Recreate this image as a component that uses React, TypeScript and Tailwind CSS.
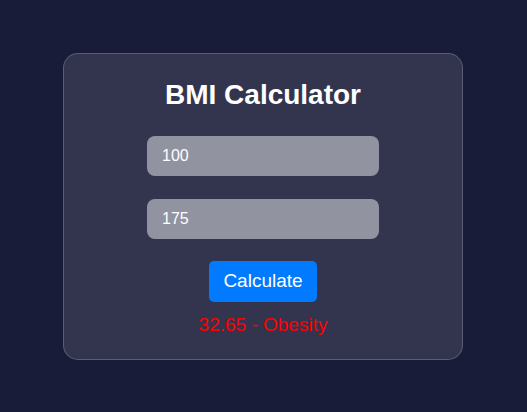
import React, { useState } from "react";

const App: React.FC = () => {
  const [weight, setWeight] = useState("100");
  const [height, setHeight] = useState("175");
  const [result, setResult] = useState("32.65 - Obesity");

  const calculate = () => {
    const w = parseFloat(weight);
    const h = parseFloat(height) / 100;
    if (!w || !h) return;
    const bmi = w / (h * h);
    let label = "Normal";
    if (bmi < 18.5) label = "Underweight";
    else if (bmi >= 30) label = "Obesity";
    else if (bmi >= 25) label = "Overweight";
    setResult(`${bmi.toFixed(2)} - ${label}`);
  };

  return (
    <div className="min-h-screen bg-[#181c38] font-['Liberation_Sans',Arial,sans-serif]">
      <div className="pt-[53px] pl-[63px]">
        {/* Card */}
        <div className="w-[400px] h-[307px] rounded-[15px] border border-white/20 bg-[#33354f] flex flex-col items-center pt-[25px]">
          <h2 className="text-[28px] leading-[32px] font-bold text-white">BMI Calculator</h2>
          <div className="flex flex-col items-center gap-[23px] mt-[25px]">
            <input
              value={weight}
              onChange={(e) => setWeight(e.target.value)}
              className="w-[232px] h-[40px] rounded-[8px] bg-[#9193a0] px-[15px] text-[16px] text-white outline-none"
            />
            <input
              value={height}
              onChange={(e) => setHeight(e.target.value)}
              className="w-[232px] h-[40px] rounded-[8px] bg-[#9193a0] px-[15px] text-[16px] text-white outline-none"
            />
          </div>
          <button
            onClick={calculate}
            className="mt-[22px] w-[108px] h-[41px] rounded-[5px] bg-[#007bff] text-white text-[19px]"
          >
            Calculate
          </button>
          <p className="mt-[11px] text-[19px] leading-[23px] text-[#ff0000]">{result}</p>
        </div>
      </div>
    </div>
  );
};

export default App;
